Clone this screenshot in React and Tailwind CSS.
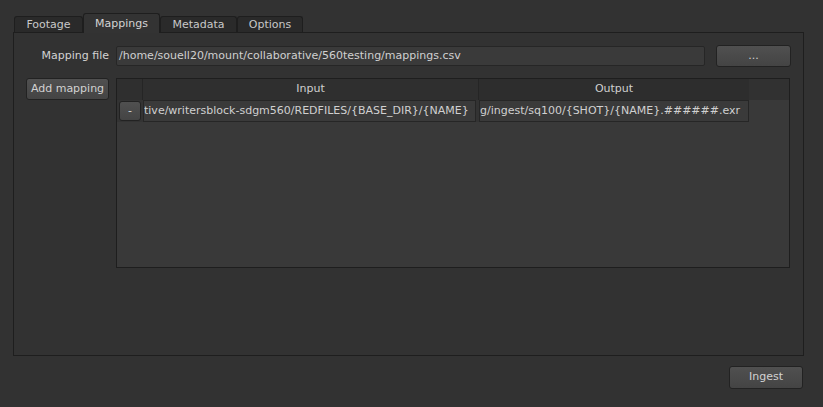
import React from 'react';

// Tab strip entries; widths follow the Qt-style tab bar
const tabs = [
  { label: 'Footage', width: 'w-[69px]' },
  { label: 'Mappings', width: 'w-[77px]', active: true },
  { label: 'Metadata', width: 'w-[77px]' },
  { label: 'Options', width: 'w-[66px]' },
];

const Button = ({ children, className = '' }) => (
  <button
    className={`flex items-center justify-center rounded-[3px] border border-[#222] bg-gradient-to-b from-[#505050] to-[#444] text-[11px] text-[#d2d2d2] ${className}`}
  >
    {children}
  </button>
);

function TabBar() {
  return (
    <div className="flex items-end pl-[14px] pt-[13px]">
      {tabs.map((tab) =>
        tab.active ? (
          <div
            key={tab.label}
            className={`relative z-10 -mb-px flex h-[20px] items-center justify-center rounded-t-[3px] border border-b-0 border-[#1e1e1e] bg-[#333] pt-[2px] text-[11px] text-[#d4d4d4] ${tab.width}`}
          >
            {tab.label}
          </div>
        ) : (
          <div
            key={tab.label}
            className={`flex h-[16px] items-center justify-center rounded-t-[3px] border border-b-0 border-[#1e1e1e] bg-[#2a2a2a] pt-[1px] text-[11px] text-[#c8c8c8] ${tab.width}`}
          >
            {tab.label}
          </div>
        )
      )}
    </div>
  );
}

function MappingTable() {
  return (
    <div className="flex h-[190px] w-[674px] flex-col border border-[#1e1e1e] bg-[#393939]">
      {/* header */}
      <div className="flex h-[21px] shrink-0 bg-[#2f2f2f] text-[11px] text-[#cfcfcf]">
        <div className="w-[26px] border-r border-[#252525]" />
        <div className="flex w-[336px] items-center justify-center border-r border-[#252525]">Input</div>
        <div className="flex w-[270px] items-center justify-center bg-[#2d2d2d]">Output</div>
        <div className="flex-1 bg-[#313131]" />
      </div>
      {/* first mapping row */}
      <div className="flex h-[22px] shrink-0 text-[11px] text-[#d0d0d0]">
        <div className="flex w-[26px] items-center justify-center bg-[#333]">
          <Button className="h-[20px] w-[22px]">-</Button>
        </div>
        <div className="flex w-[336px] items-center bg-[#333] pr-[3px]">
          <div className="flex h-[22px] flex-1 items-center overflow-hidden whitespace-nowrap border border-[#262626] bg-[#3a3a3a]">
            tive/writersblock-sdgm560/REDFILES/{'{'}BASE_DIR{'}'}/{'{'}NAME{'}'}
          </div>
        </div>
        <div className="flex w-[270px] items-center bg-[#333]">
          <div className="flex h-[22px] flex-1 items-center overflow-hidden whitespace-nowrap border border-[#262626] bg-[#3a3a3a]">
            g/ingest/sq100/{'{'}SHOT{'}'}/{'{'}NAME{'}'}.######.exr
          </div>
        </div>
        <div className="flex-1" />
      </div>
    </div>
  );
}

export default function App() {
  return (
    <div
      className="flex h-[407px] w-[823px] flex-col bg-[#323232]"
      style={{ fontFamily: '"DejaVu Sans", sans-serif' }}
    >
      <TabBar />
      <div className="ml-[13px] flex h-[324px] w-[791px] flex-col gap-[11px] border border-[#1e1e1e] bg-[#323232] pl-[12px] pr-[12px] pt-[12px]">
        <div className="flex items-center gap-[7px]">
          <div className="w-[83px] text-right text-[11px] text-[#d2d2d2]">Mapping file</div>
          <div className="flex h-[20px] flex-1 items-center rounded-[2px] border border-[#262626] bg-[#3a3a3a] pl-[2px] text-[11px] text-[#d0d0d0]">
            /home/souell20/mount/collaborative/560testing/mappings.csv
          </div>
          <Button className="ml-[4px] h-[22px] w-[75px]">...</Button>
        </div>
        <div className="flex items-start gap-[7px]">
          <Button className="h-[22px] w-[83px]">Add mapping</Button>
          <MappingTable />
        </div>
      </div>
      <div className="flex justify-end pr-[20px] pt-[10px]">
        <Button className="h-[23px] w-[74px]">Ingest</Button>
      </div>
    </div>
  );
}
